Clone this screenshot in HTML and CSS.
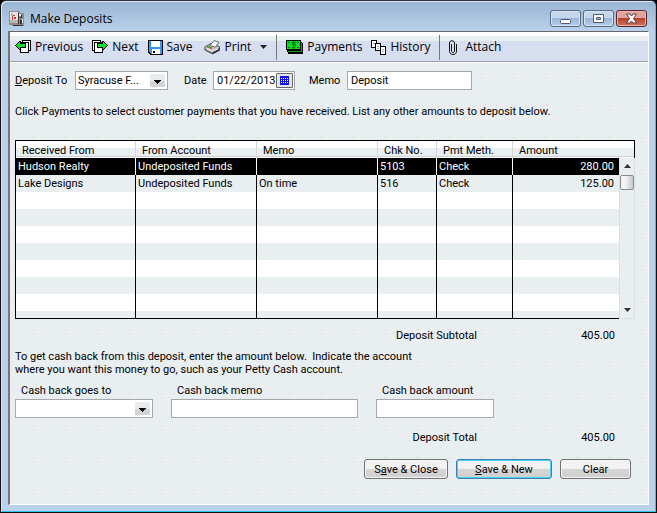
FILE: index.html
```html
<!DOCTYPE html>
<html lang="en">
<head>
    <meta charset="UTF-8">
    <meta name="viewport" content="width=device-width, initial-scale=1.0">
    <title>Make Deposits</title>
    <link rel="stylesheet" href="styles.css">
</head>
<body>
<div class="window">
    <header class="titlebar">
        <svg class="app-icon" width="16" height="16" viewBox="0 0 16 16" shape-rendering="crispEdges">
            <path fill="#8c8c8c" d="M0 0h11v2h4v13H3v-1H0z"/>
            <path fill="#e8e4e4" d="M1 1h8v11H1z"/>
            <path fill="#b9b5b5" d="M1 9h8v3H1zM2 2h2v3H2z"/>
            <path fill="#c23a3a" d="M3 5h1v4H3zM4 4h2v1H4zM5 6h2v2H5z"/>
            <path fill="#333" d="M9 2h1v11H9zM12 4h1v3h-2V6h1zM11 9h2v4h-2zM4 14h10v1H4z"/>
            <path fill="#f4f4f4" d="M10 3h2v2h-2zM13 8h1v4h-1z"/>
        </svg>
        <h1>Make Deposits</h1>
        <div class="window-buttons">
            <button type="button" aria-label="Minimize">
                <svg width="13" height="11" viewBox="0 0 13 11"><rect x="1.5" y="6.5" width="10" height="4" rx="1" fill="#fff" stroke="#4f5a6a"/></svg>
            </button>
            <button type="button" aria-label="Maximize">
                <svg width="13" height="11" viewBox="0 0 13 11"><path fill="#fff" fill-rule="evenodd" stroke="#4f5a6a" d="M1.5 1.5h10v8h-10zM4.500 4.500h4v2h-4z"/></svg>
            </button>
            <button type="button" class="close" aria-label="Close">
                <svg width="13" height="11" viewBox="0 0 13 11"><path fill="#fff" stroke="#5b4045" d="M1.500 1h3.500l1.500 2 1.500-2h3.500L8.500 5.500l3 4.500H8L6.500 8 5 10H1.500l3-4.500z"/></svg>
            </button>
        </div>
    </header>

    <main class="client">
        <nav class="toolbar">
            <button type="button">
                <svg width="16" height="14" viewBox="0 0 16 14" shape-rendering="crispEdges">
                    <path fill="#000" d="M7 0h9v11h-2v2H5V2h2z"/>
                    <path fill="#fff" d="M8 1h7v9h-1V2H8zM6 3h7v9H6z"/>
                    <path fill="#000" d="M0 5h1V4h1V3h1V2h1V1h2v2h5v5H6v2H4V9H3V8H2V7H1V6H0z"/>
                    <path fill="#12e02a" d="M1 5h1V4h1V3h1V2h1v2h5v3H5v2H4V8H3V7H2V6H1z"/>
                </svg>
                Previous
            </button>
            <button type="button">
                <svg width="16" height="14" viewBox="0 0 16 14" shape-rendering="crispEdges">
                    <path fill="#000" d="M0 0h9v2h2v11H2v-2H0z"/>
                    <path fill="#fff" d="M1 1h7v1H2v8H1zM3 3h7v9H3z"/>
                    <path fill="#000" d="M16 5h-1V4h-1V3h-1V2h-1V1h-2v2H5v5h5v2h2V9h1V8h1V7h1V6h1z"/>
                    <path fill="#12e02a" d="M15 5h-1V4h-1V3h-1V2h-1v2H6v3h5v2h1V8h1V7h1V6h1z"/>
                </svg>
                Next
            </button>
            <button type="button">
                <svg width="15" height="15" viewBox="0 0 15 15" shape-rendering="crispEdges">
                    <path fill="#000" d="M0 0h15v15H2l-2-2z"/>
                    <path fill="#3598f5" d="M1 1h13v13H3l-2-2z"/>
                    <path fill="#fff" d="M3 1h9v6H3zM4 9h8v5H4z"/>
                    <path fill="#000" d="M5 11h2v2H5z"/>
                </svg>
                Save
            </button>
            <button type="button" class="print">
                <svg width="17" height="15" viewBox="0 0 17 15">
                    <path fill="#c8cac8" stroke="#333" stroke-width=".8" d="M.8 7 7 3.500l8.500 3.200v3.500L8.500 14 .8 10z"/>
                    <path fill="#777" d="M1 8.500 8.500 12v2L1 10.400z"/>
                    <path fill="#333" d="m8.500 11.500 7-3.500v2.500l-7 3.800z"/>
                    <path fill="#fff" stroke="#444" stroke-width=".8" d="M6 5.500 10 .6l5 1.600-3.500 5z"/>
                    <path fill="#12c82a" d="M3 6h3v2H3z"/>
                    <path fill="#e43b3b" d="M6 7h2v2H6z"/>
                    <path stroke="#fff" d="m3 9 5.500 2.500L14 9" fill="none"/>
                </svg>
                Print
            </button>
            <button type="button" class="caret" aria-label="Print options">
                <svg width="7" height="4" viewBox="0 0 7 4"><path fill="#222" d="M0 0h7L3.500 4z"/></svg>
            </button>
            <span class="separator"></span>
            <button type="button">
                <svg width="17" height="14" viewBox="0 0 17 14" shape-rendering="crispEdges">
                    <path fill="#000" d="M0 0h15v2h1v1h1v11H2v-2H1v-2H0z"/>
                    <path fill="#0a9c1c" d="M2 11h13V3h1v9H2z"/>
                    <path fill="#12d82a" d="M1 1h13v8H1z"/>
                    <path fill="#067a16" d="M2 2h2v1H2zM11 2h2v1h-2zM2 7h2v1H2zM11 7h2v1h-2zM6 2h4v1H7v1h3v3H9v1H6V7h3V5H6zM7 1h1v8H7z"/>
                </svg>
                Payments
            </button>
            <button type="button">
                <svg width="15" height="15" viewBox="0 0 15 15" shape-rendering="crispEdges">
                    <path fill="#000" d="M0 0h6v8H0z"/><path fill="#fff" d="M1 1h4v6H1z"/>
                    <path fill="#000" d="M4 3h6v8H4z"/><path fill="#fff" d="M5 4h4v6H5z"/>
                    <path fill="#000" d="M9 6h6v9H9z"/><path fill="#fff" d="M10 7h4v7h-4z"/>
                    <path fill="#aaa" d="M2 3h2v1H2zM6 6h2v1H6zM6 8h2v1H6zM11 9h2v1h-2zM11 11h2v1h-2z"/>
                </svg>
                History
            </button>
            <span class="separator"></span>
            <button type="button" class="attach">
                <svg width="8" height="15" viewBox="0 0 8 15"><path fill="none" stroke="#111" d="M2.500 4v7c0 2 3 2 3 0V3c0-3-5-3-5 0v8.500c0 4 7 4 7 0V4"/></svg>
                Attach
            </button>
        </nav>

        <form class="content">
            <div class="fields">
                <label for="account" class="account-label"><u>D</u>eposit To</label>
                <select id="account" class="account"><option>Syracuse F...</option></select>
                <label for="date">Date</label>
                <div class="date-box">
                    <input type="text" id="date" value="01/22/2013">
                    <button type="button" aria-label="Open calendar">
                        <svg width="9" height="9" viewBox="0 0 9 9" shape-rendering="crispEdges">
                            <path fill="#1010f0" d="M0 0h9v9H0z"/>
                            <path stroke="#fff" d="M1 2.500h7M1 4.500h7M1 6.500h7" stroke-dasharray="1 1"/>
                        </svg>
                    </button>
                </div>
                <label for="memo">Memo</label>
                <input type="text" id="memo" class="memo" value="Deposit">
            </div>

            <p class="help">Click Payments to select customer payments that you have received. List any other amounts to deposit below.</p>

            <table class="deposits">
                <colgroup>
                    <col class="col-from"><col class="col-account"><col class="col-memo">
                    <col class="col-chk"><col class="col-method"><col class="col-amount"><col class="col-scroll">
                </colgroup>
                <thead>
                    <tr>
                        <th>Received From</th>
                        <th>From Account</th>
                        <th>Memo</th>
                        <th>Chk No.</th>
                        <th>Pmt Meth.</th>
                        <th colspan="2">Amount</th>
                    </tr>
                </thead>
                <tbody>
                    <tr class="selected">
                        <td>Hudson Realty</td><td>Undeposited Funds</td><td></td><td>5103</td><td>Check</td><td class="amount">280.00</td>
                        <td class="scroll-cell" rowspan="10">
                            <div class="scrollbar">
                                <svg width="7" height="4" viewBox="0 0 7 4"><path fill="#333" d="M3.500 0 7 4H0z"/></svg>
                                <span class="thumb"></span>
                                <svg class="down" width="7" height="4" viewBox="0 0 7 4"><path fill="#333" d="M0 0h7L3.500 4z"/></svg>
                            </div>
                        </td>
                    </tr>
                    <tr><td>Lake Designs</td><td>Undeposited Funds</td><td>On time</td><td>516</td><td>Check</td><td class="amount">125.00</td></tr>
                    <tr><td></td><td></td><td></td><td></td><td></td><td></td></tr>
                    <tr><td></td><td></td><td></td><td></td><td></td><td></td></tr>
                    <tr><td></td><td></td><td></td><td></td><td></td><td></td></tr>
                    <tr><td></td><td></td><td></td><td></td><td></td><td></td></tr>
                    <tr><td></td><td></td><td></td><td></td><td></td><td></td></tr>
                    <tr><td></td><td></td><td></td><td></td><td></td><td></td></tr>
                    <tr><td></td><td></td><td></td><td></td><td></td><td></td></tr>
                    <tr class="last"><td></td><td></td><td></td><td></td><td></td><td></td></tr>
                </tbody>
            </table>

            <div class="total">
                <span>Deposit Subtotal</span>
                <span class="value">405.00</span>
            </div>

            <p class="cash-help">To get cash back from this deposit, enter the amount below.&nbsp; Indicate the account<br>where you want this money to go, such as your Petty Cash account.</p>

            <div class="cash-back">
                <div class="field goes-to">
                    <label for="cash-account">Cash back goes to</label>
                    <select id="cash-account"><option></option></select>
                </div>
                <div class="field cash-memo">
                    <label for="cash-memo">Cash back memo</label>
                    <input type="text" id="cash-memo">
                </div>
                <div class="field cash-amount">
                    <label for="cash-amount">Cash back amount</label>
                    <input type="text" id="cash-amount">
                </div>
            </div>

            <div class="total">
                <span>Deposit Total</span>
                <span class="value">405.00</span>
            </div>

            <div class="actions">
                <button type="button" class="save-close">S<u>a</u>ve &amp; Close</button>
                <button type="button" class="save-new"><u>S</u>ave &amp; New</button>
                <button type="button" class="clear">Clear</button>
            </div>
        </form>
    </main>
</div>
</body>
</html>
```

FILE: styles.css
```css
* {
    box-sizing: border-box;
}
body {
    margin: 0;
    background: #000;
    color: #000;
    font: 11px/13px Roboto, Tahoma, sans-serif;
}
button, input, select {
    margin: 0;
    color: inherit;
    font: inherit;
}
svg {
    display: block;
    flex: none;
}
p {
    margin: 0;
}

/* Window frame */
.window {
    display: flex;
    flex-direction: column;
    min-height: 100vh;
    padding: 0 7px 7px;
    border: 1px solid #111;
    border-top-color: #2b2f36;
    border-radius: 6px 6px 0 0;
    background: linear-gradient(#99b4d2, #b9d1ea 30px);
    box-shadow: inset -1px -1px #35c5e8, inset 1px 1px #dce9f6;
}
.titlebar {
    display: flex;
    align-items: center;
    gap: 5px;
    height: 30px;
    padding: 5px 2px 0 1px;
}
.titlebar h1 {
    flex: 1;
    margin: 0;
    font: 12px/16px "Open Sans", "Segoe UI", sans-serif;
}
.window-buttons {
    display: flex;
    gap: 2px;
}
.window-buttons button {
    display: flex;
    align-items: center;
    justify-content: center;
    width: 31px;
    height: 17px;
    padding: 0;
    border: 1px solid #566a86;
    border-radius: 3px;
    background: linear-gradient(#c3d6ec 45%, #9bb7d6 50%, #b5cfea);
    box-shadow: inset 0 0 0 1px #d6e4f4;
}
.window-buttons .close {
    border-color: #5a2430;
    background: linear-gradient(#e3a59b 45%, #b9412c 50%, #cf7560);
    box-shadow: inset 0 0 0 1px #e8b5ab;
}
.client {
    flex: 1;
    display: flex;
    flex-direction: column;
    border: 1px solid #fff;
    border-top-color: #666;
    border-left: 2px solid #777;
    background-color: #e9eef1;
    background-image: url('data:image/svg+xml,%3Csvg xmlns="http://www.w3.org/2000/svg" width="32" height="32" shape-rendering="crispEdges"%3E%3Cpath fill="%23dadddd" d="M3 9h1v1H3zM7 15h1v1H7zM12 18h1v1h-1zM22 9h1v1h-1zM31 13h1v1h-1zM26 24h1v1h-1zM14 24h1v1h-1z"/%3E%3Cpath fill="%23e5dbd3" d="M24 9h2v1h-2zM22 14h1v1h-1z"/%3E%3C/svg%3E');
}

/* Toolbar */
.toolbar {
    display: flex;
    align-items: center;
    gap: 9px;
    height: 30px;
    padding: 0 5px;
    border-top: 1px solid #fff;
    border-bottom: 1px solid #9c9db0;
    background: linear-gradient(#fff 3px, #e9eef1 3px 8px, #d7def0 8px);
    box-shadow: 0 1px #fff;
    font: 12px/16px "Open Sans", "Segoe UI", sans-serif;
}
.toolbar button {
    display: flex;
    align-items: center;
    gap: 4px;
    padding: 0;
    border: 0;
    background: none;
}
.toolbar .print {
    margin-left: 2px;
}
.toolbar .attach {
    gap: 8px;
}
.toolbar .separator {
    width: 1px;
    height: 25px;
    background: #777;
}

/* Top fields */
.content {
    flex: 1;
    padding: 9px 13px 9px 5px;
}
input, select {
    height: 19px;
    padding: 0 3px;
    border: 1px solid #a6a8ab;
    border-radius: 0;
    background: #fff;
}
select {
    padding: 0 2px;
    appearance: none;
    background: #fff url('data:image/svg+xml,%3Csvg xmlns="http://www.w3.org/2000/svg" width="15" height="13" shape-rendering="crispEdges"%3E%3Cpath fill="%23e9ecee" d="M0 0h15v7H0z"/%3E%3Cpath fill="%23d2d3d4" d="M0 7h15v6H0z"/%3E%3Cpath d="M4 6h7v1h-1v1H9v1H8v1H7V9H6V8H5V7H4z"/%3E%3C/svg%3E') no-repeat right 2px center;
}
.fields {
    display: grid;
    grid-template-columns: 60px 93px 16px 29px 82px 14px 38px 125px;
    align-items: center;
}
.fields label[for="date"] {
    grid-column: 4;
}
.fields label[for="memo"] {
    grid-column: 7;
}
.date-box {
    display: flex;
    align-items: center;
    height: 19px;
    padding-right: 1px;
    border: 1px solid #a6a8ab;
    background: #fff;
}
.date-box input {
    flex: 1;
    min-width: 0;
    height: 17px;
    padding-right: 0;
    border: 0;
}
.date-box button {
    display: flex;
    align-items: center;
    justify-content: center;
    width: 17px;
    height: 15px;
    padding: 0;
    border: 1px solid #666;
    border-radius: 1px;
    background: #e4e6e8;
}
.help {
    margin: 15px 0 22px;
}

/* Deposits table */
.deposits {
    width: 100%;
    table-layout: fixed;
    border-spacing: 0;
    border-top: 1px solid #000;
}
.col-from, .col-account, .col-memo {
    width: 121px;
}
.col-chk {
    width: 59px;
}
.col-method {
    width: 76px;
}
.col-amount {
    width: 106px;
}
.col-scroll {
    width: 16px;
}
.deposits th {
    height: 17px;
    padding: 2px 6px 0;
    border-right: 1px solid #d5d7d9;
    background: linear-gradient(#fff 7px, #e9eef1 7px 15px, #d0d2d4 15px 16px, #fff 16px);
    font-weight: normal;
    line-height: 15px;
    text-align: left;
}
.deposits th:first-child, .deposits td:first-child {
    border-left: 1px solid #000;
}
.deposits th:last-child {
    border-right-color: #000;
}
.deposits td {
    height: 17px;
    padding: 0 2px;
    border-right: 1px solid #000;
    background: #fff;
    white-space: nowrap;
}
.deposits tr:nth-child(even) td {
    background: #e9eef1;
}
.deposits .selected td {
    border-right-color: #fff;
    background: #000;
    color: #fff;
}
.deposits td:nth-child(6) {
    border-right: 0;
}
.deposits .amount {
    padding-right: 5px;
    text-align: right;
}
.deposits .last td {
    height: 8px;
    border-bottom: 1px solid #000;
}
.deposits .selected .scroll-cell {
    height: auto;
    padding: 0;
    border: 0;
    background: #e9eef1;
}
.scrollbar {
    display: flex;
    flex-direction: column;
    align-items: center;
    height: 161px;
    padding: 6px 0;
    border: 1px solid #dcdfe2;
    border-top: 0;
}
.scrollbar .thumb {
    width: 14px;
    height: 15px;
    margin-top: 7px;
    border: 1px solid #8a8c8f;
    border-radius: 2px;
    background: linear-gradient(90deg, #f4f4f4 35%, #c4c6c8);
}
.scrollbar .down {
    margin-top: auto;
}

/* Totals and cash back */
.total {
    display: grid;
    grid-template-columns: 1fr 138px;
    margin-right: 20px;
    text-align: right;
}
.deposits + .total {
    margin-top: 10px;
}
.cash-help {
    margin: 8px 0;
}
.cash-back {
    display: flex;
    gap: 18px;
    margin-bottom: 13px;
}
.field {
    display: flex;
    flex-direction: column;
    gap: 2px;
}
.field label {
    padding-left: 6px;
}
.goes-to {
    width: 138px;
}
.cash-memo {
    width: 187px;
}
.cash-amount {
    width: 118px;
}

/* Action buttons */
.actions {
    display: flex;
    justify-content: flex-end;
    gap: 8px;
    margin: 15px 4px 0 0;
}
.actions button {
    height: 20px;
    padding: 0;
    border: 1px solid #707070;
    border-radius: 3px;
    background: linear-gradient(#f2f2f2 50%, #d6d6d6 50%, #cfcfcf);
    box-shadow: inset 0 0 0 1px #f6f6f6;
}
.actions .save-close {
    width: 84px;
}
.actions .save-new {
    width: 96px;
    border-color: #3c7fb1;
    box-shadow: inset 0 0 0 1px #46d0f4;
}
.actions .clear {
    width: 71px;
}
```
